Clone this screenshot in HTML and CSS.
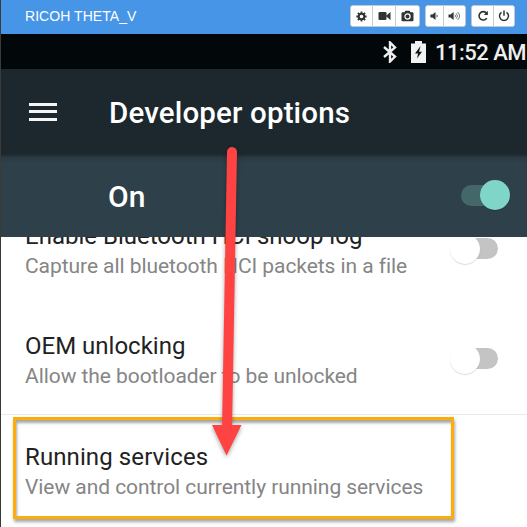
FILE: index.html
```html
<!DOCTYPE html>
<html lang="en">
<head>
<meta charset="utf-8">
<title>RICOH THETA_V</title>
<link rel="stylesheet" href="styles.css">
</head>
<body>
<div class="window">
  <header class="titlebar">
    <span class="device">RICOH THETA_V</span>
    <div class="tools">
      <div class="group media">
        <button class="tool" aria-label="Settings"><svg width="11" height="11" viewBox="0 0 11 11"><circle cx="5.5" cy="5.5" r="2.8" fill="none" stroke="#333" stroke-width="2"/><path d="M5.5 .4v2M5.5 8.6v2M.4 5.5h2M8.6 5.5h2M1.9 1.9l1.4 1.4M7.7 7.7l1.4 1.4M9.1 1.9L7.7 3.3M3.3 7.7L1.9 9.1" stroke="#333" stroke-width="1.8"/></svg></button>
        <button class="tool" aria-label="Record"><svg width="13" height="10" viewBox="0 0 13 10"><rect x=".5" y="1" width="8" height="8" rx="1.3" fill="#333"/><path d="M7.800 5L12.500 1v8z" fill="#333"/></svg></button>
        <button class="tool" aria-label="Screenshot"><svg width="13" height="12" viewBox="0 0 13 12"><path d="M1.500 2.300h2L4.300.7h4.400l.8 1.600h2q1 0 1 1v6.900q0 1-1 1h-10q-1 0-1-1V3.300q0-1 1-1z" fill="#333"/><circle cx="6.500" cy="6.500" r="2.600" fill="none" stroke="#fff" stroke-width="1.200"/></svg></button>
      </div>
      <div class="group volume">
        <button class="tool" aria-label="Volume down"><svg width="9" height="10" viewBox="0 0 9 10"><path d="M.4 3.500h2L5.500 1v8L2.400 6.500h-2z" fill="#333"/><path d="M6.700 3.700q1.300 1.300 0 2.600" fill="none" stroke="#333" stroke-width=".9"/></svg></button>
        <button class="tool" aria-label="Volume up"><svg width="13" height="10" viewBox="0 0 13 10"><path d="M.5 3.500h2L5.600 1v8L2.500 6.500h-2z" fill="#333"/><path d="M6.900 3.700q1.300 1.300 0 2.600M8.200 2.300q2.600 2.700 0 5.400M9.600 1q4 4 0 8" fill="none" stroke="#555" stroke-width=".8"/></svg></button>
      </div>
      <div class="group power">
        <button class="tool" aria-label="Rotate"><svg width="12" height="12" viewBox="0 0 12 12"><path d="M9.600 3.300A4.200 4.200 0 1 0 9.800 8.100" fill="none" stroke="#333" stroke-width="1.600"/><path d="M10.900.8v4.100H6.800z" fill="#333"/></svg></button>
        <button class="tool" aria-label="Power"><svg width="12" height="12" viewBox="0 0 12 12"><path d="M3.500 2.300a4.500 4.500 0 1 0 5 0M6 .6v5.200" fill="none" stroke="#333" stroke-width="1.500"/></svg></button>
      </div>
    </div>
  </header>
  <div class="status">
    <svg width="14" height="22" viewBox="0 0 14 22"><path d="M1 6L12 15.500 7 20.500V1.500L12 6.500 1 16" fill="none" stroke="#eee" stroke-width="2.400"/></svg>
    <svg class="battery" width="15" height="22" viewBox="0 0 15 22"><path d="M0 2.500h4V0h7v2.500h4V22H0z" fill="#f2f2f2"/><path d="M9.500 5L4 12.400h3.100L6 17.500 11 10.700H8.100z" fill="#111719"/></svg>
    <span class="clock">11:52 AM</span>
  </div>
  <div class="appbar">
    <div class="menu"><i></i><i></i><i></i></div>
    <h1 class="heading">Developer options</h1>
  </div>
  <div class="master">
    <span class="state">On</span>
    <div class="switch on"><i class="thumb"></i></div>
  </div>
  <main class="list">
    <section class="row">
      <div class="copy"><h2 class="name">Enable Bluetooth HCI snoop log</h2><p class="note">Capture all bluetooth HCI packets in a file</p></div>
      <div class="switch"><i class="thumb"></i></div>
    </section>
    <section class="row">
      <div class="copy"><h2 class="name">OEM unlocking</h2><p class="note">Allow the bootloader to be unlocked</p></div>
      <div class="switch"><i class="thumb"></i></div>
    </section>
    <section class="row divided">
      <div class="copy"><h2 class="name wide">Running services</h2><p class="note">View and control currently running services</p></div>
    </section>
  </main>
</div>
<div class="highlight"></div>
<svg class="arrow" width="60" height="330" viewBox="200 140 60 330"><path d="M232 152L227 430" stroke="#ff4343" stroke-width="10" stroke-linecap="round"/><path d="M212 425h29.500L226.500 455.500z" fill="#ff4343"/></svg>
</body>
</html>
```
FILE: styles.css
```css
* { box-sizing: border-box; }
body {
  margin: 0;
  width: 527px;
  height: 527px;
  overflow: hidden;
  position: relative;
  background: #fff;
  font-family: Roboto, sans-serif;
}
.window { height: 527px; border-left: 1px solid #3c3a39; overflow: hidden; }
.titlebar {
  height: 34px;
  padding: 0 12px 2px 24px;
  background: #4795e6;
  display: flex;
  align-items: center;
  justify-content: space-between;
}
.device { color: #fff; font: 14px "Liberation Sans", sans-serif; letter-spacing: .05px; white-space: nowrap; }
.tools { display: flex; gap: 5px; }
.group {
  display: grid;
  height: 22px;
  background: #fff;
  border: 1px solid #c4c8cc;
  border-radius: 3px;
  overflow: hidden;
}
.media { width: 70px; grid-template-columns: 21px 23px 24px; }
.volume { width: 41px; grid-template-columns: 17px 22px; }
.power { width: 44px; grid-template-columns: 21px 21px; }
.tool {
  padding: 0;
  border: 0;
  background: #fff;
  display: flex;
  align-items: center;
  justify-content: center;
}
.tool + .tool { border-left: 1px solid #ccc; }
.status {
  height: 35px;
  padding-right: 1px;
  background: #020709;
  display: flex;
  align-items: center;
  justify-content: flex-end;
}
.battery { margin: 0 9px 0 14px; }
.clock { color: #eee; font-size: 22px; font-weight: 500; letter-spacing: -.5px; white-space: nowrap; padding-top: 2px; }
.appbar {
  height: 85px;
  padding-left: 28px;
  background: #1c282e;
  display: flex;
  align-items: center;
}
.menu { width: 28px; display: grid; gap: 4.500px; }
.menu i { height: 3px; background: #f5f5f5; }
.heading { margin: 3px 0 0 52px; color: #fff; font-size: 29.500px; font-weight: 500; letter-spacing: .15px; white-space: nowrap; }
.master {
  height: 83px;
  padding: 2px 18px 0 107px;
  background: linear-gradient(#1c282e, #2b3b43 4px, #2e4049 9px);
  display: flex;
  align-items: center;
  justify-content: space-between;
}
.master .switch { margin-top: -3px; }
.state { color: #fff; font-size: 30px; font-weight: 500; }
.list { height: 290px; overflow: hidden; }
.row {
  height: 110px;
  padding: 3px 29px 0 24px;
  display: flex;
  align-items: center;
  justify-content: space-between;
}
.row:first-child { margin-top: -43px; }
.row .switch { margin-top: -4px; }
.divided { height: 111px; border-top: 1px solid #e9e9e9; }
.name { margin: 0; font-size: 24px; line-height: 30px; font-weight: 400; color: #222; white-space: nowrap; }
.name.wide { letter-spacing: .1px; }
.note { margin: 0; font-size: 21px; line-height: 30px; letter-spacing: -.06px; color: #858585; white-space: nowrap; }
.switch { width: 48px; height: 30px; display: flex; align-items: center; }
.switch::before { content: ""; flex: none; width: 33px; height: 21px; border-radius: 0 11px 11px 0; background: #c4c4c4; margin-left: 15px; }
.thumb { flex: none; width: 30px; height: 30px; border-radius: 50%; background: #fff; box-shadow: 0 1px 1px rgba(0,0,0,.14); margin-left: -48px; }
.on::before { width: 34px; margin: 0; border-radius: 11px; background: #44686a; }
.on .thumb { background: #80d5c9; margin-left: -15px; }
.highlight {
  position: absolute;
  left: 13px;
  top: 417px;
  width: 441px;
  height: 102px;
  border: 3px solid #fcac0b;
  box-shadow: 1px 3px 3px rgba(0,0,0,.35), inset 1px 3px 3px rgba(0,0,0,.35);
}
.arrow { position: absolute; left: 200px; top: 140px; filter: drop-shadow(0 2px 2px rgba(0,0,0,.35)); }
```
